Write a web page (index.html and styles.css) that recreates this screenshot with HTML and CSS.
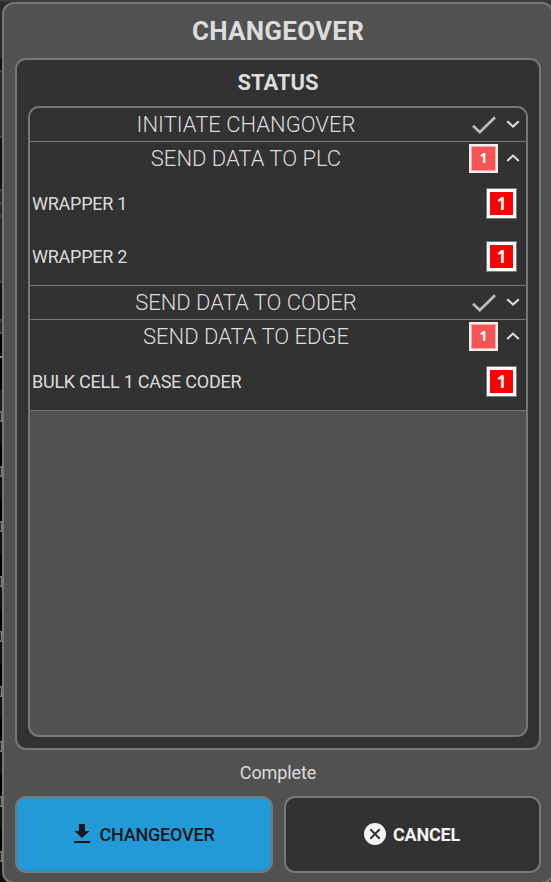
FILE: index.html
```html
<!DOCTYPE html>
<html lang="en">
<head>
<meta charset="utf-8">
<title>Changeover</title>
<link rel="stylesheet" href="styles.css">
</head>
<body>
<svg class="backdrop" width="12" height="882" aria-hidden="true">
  <defs>
    <pattern id="rows" y="411" width="12" height="55" patternUnits="userSpaceOnUse">
      <path fill="#111" d="M0 0h12v33H0z"/><path fill="#000" d="M0 33h12v22H0z"/>
      <path fill="none" stroke="#777" stroke-width="1.4" d="M0 .7h1.5v9.6H0"/>
    </pattern>
  </defs>
  <path fill="#2a2a2a" d="M0 2h12v400H0z"/>
  <path fill="#111" d="M0 59h12v11H0zM0 138h12v51H0zM0 283h12v36H0z"/>
  <path fill="#000" d="M0 334h12v55H0z"/>
  <path fill="#444" d="M0 70h12v2H0zM0 136h12v2H0zM0 189h12v2H0zM0 202h12v2H0zM0 215h12v2H0zM0 281h12v2H0zM0 319h12v2H0zM0 332h12v2H0z"/>
  <path fill="#888" d="M0 356h12v2H0z"/>
  <path fill="#1c1c1c" d="M0 389h12v22H0z"/>
  <path fill="url(#rows)" d="M0 411h12v471H0z"/>
</svg>
<svg class="symbols" aria-hidden="true">
  <symbol id="check" viewBox="0 0 24 18"><path fill="none" stroke="#bcbcbc" stroke-width="2.7" d="M1 9.8l6.8 6.4L23 1.2"/></symbol>
  <symbol id="down" viewBox="0 0 14 8"><path fill="none" stroke="#dcdcdc" stroke-width="2.1" d="M1.2 1.2L7 6.5l5.8-5.3"/></symbol>
  <symbol id="up" viewBox="0 0 14 8"><path fill="none" stroke="#dcdcdc" stroke-width="2.1" d="M1.2 7L7 1.6 12.8 7"/></symbol>
</svg>
<main class="dialog">
  <h1 class="title">CHANGEOVER</h1>
  <section class="status">
    <h2 class="heading">STATUS</h2>
    <div class="list">
      <section class="group">
        <div class="row"><span class="name">INITIATE CHANGOVER</span><svg class="check"><use href="#check"/></svg><svg class="chevron"><use href="#down"/></svg></div>
      </section>
      <section class="group">
        <div class="row"><span class="name">SEND DATA TO PLC</span><span class="count">1</span><svg class="chevron"><use href="#up"/></svg></div>
        <div class="item"><span>WRAPPER 1</span><span class="error">1</span></div>
        <div class="item"><span>WRAPPER 2</span><span class="error">1</span></div>
      </section>
      <section class="group">
        <div class="row"><span class="name">SEND DATA TO CODER</span><svg class="check"><use href="#check"/></svg><svg class="chevron"><use href="#down"/></svg></div>
      </section>
      <section class="group">
        <div class="row"><span class="name">SEND DATA TO EDGE</span><span class="count">1</span><svg class="chevron"><use href="#up"/></svg></div>
        <div class="item"><span>BULK CELL 1 CASE CODER</span><span class="error">1</span></div>
      </section>
    </div>
  </section>
  <p class="message">Complete</p>
  <div class="actions">
    <button class="button primary"><svg class="download" viewBox="0 0 16 19"><path fill="#171717" d="M5 0h6v7h4.5L8 14 .5 7H5zM0 17h16v2H0z"/></svg>CHANGEOVER</button>
    <button class="button"><svg class="close" viewBox="0 0 22 22"><circle cx="11" cy="11" r="11" fill="#f4f4f4"/><path stroke="#323232" stroke-width="2" d="M6.3 6.3l9.4 9.4M15.7 6.3l-9.4 9.4"/></svg>CANCEL</button>
  </div>
</main>
</body>
</html>
```

FILE: styles.css
```css
* { box-sizing: border-box; }
html, body { height: 882px; overflow: hidden; }
body { margin: 0; padding: 2px 0 0 2px; background: #3a3a3a; color: #dcdcdc; font-family: Roboto, "Liberation Sans", sans-serif; }
.backdrop { position: absolute; left: 0; top: 0; z-index: -1; }
.symbols { position: absolute; width: 0; height: 0; }
.dialog { width: 552px; height: 882px; padding: 0 11px; border: 2px solid #777; border-radius: 12px; background: #515151; }
.title { height: 54px; margin: 0; font-size: 26px; line-height: 55px; font-weight: 700; letter-spacing: .25px; text-align: center; }
.status { display: flex; flex-direction: column; height: 692px; padding: 0 11px 11px; border: 2px solid #777; border-radius: 11px; background: #323232; }
.heading { height: 46px; margin: 0; font-size: 22px; line-height: 46px; font-weight: 700; text-align: center; }
.list { flex: 1; overflow: hidden; border: 2px solid #777; border-radius: 11px; background: #515151; }
.group { border-bottom: 1px solid #777; background: #323232; }
.row { display: flex; align-items: center; height: 33px; padding-right: 6px; }
.name { flex: 1; padding-right: 7px; font-size: 22px; line-height: 33px; font-weight: 300; text-align: center; }
.check { width: 24px; height: 18px; margin: 1px 10px 0 3px; }
.chevron { width: 14px; height: 8px; margin-bottom: 1px; }
.count { width: 29px; height: 29px; margin-right: 8px; border: 2px solid #f4eeee; outline: 1px solid #f6aaaa; outline-offset: -3px; background: #f65555; color: #fff; font: 700 14px/24px "Open Sans", sans-serif; text-align: center; }
.item { display: flex; align-items: center; justify-content: space-between; height: 57px; padding: 0 9px 0 2px; font-size: 18px; letter-spacing: -.25px; }
.item + .item { height: 53px; padding-bottom: 4px; }
.error { width: 31px; height: 31px; border: 1px solid #777; box-shadow: inset 0 0 0 3px #fff; background: #f00; color: #fff; font: 700 17px/29px "Open Sans", sans-serif; letter-spacing: 0; text-align: center; }
.message { height: 46px; margin: 0; font-size: 18px; line-height: 46px; letter-spacing: -.1px; text-align: center; }
.actions { display: grid; grid-template-columns: 258px 257px; gap: 11px; height: 77px; }
.button { display: flex; align-items: center; justify-content: center; padding: 0 1px 0 0; border: 2px solid #777; border-radius: 11px; background: #323232; color: #f4f4f4; font: 700 18px/24px Roboto, sans-serif; letter-spacing: -.2px; }
.primary { padding: 0 0 0 1px; background: #229ad7; color: #171717; font-weight: 500; }
.download { width: 16px; height: 19px; margin: 0 9px 2px 0; }
.close { width: 22px; height: 22px; margin: 0 7px 1px 0; }
```
